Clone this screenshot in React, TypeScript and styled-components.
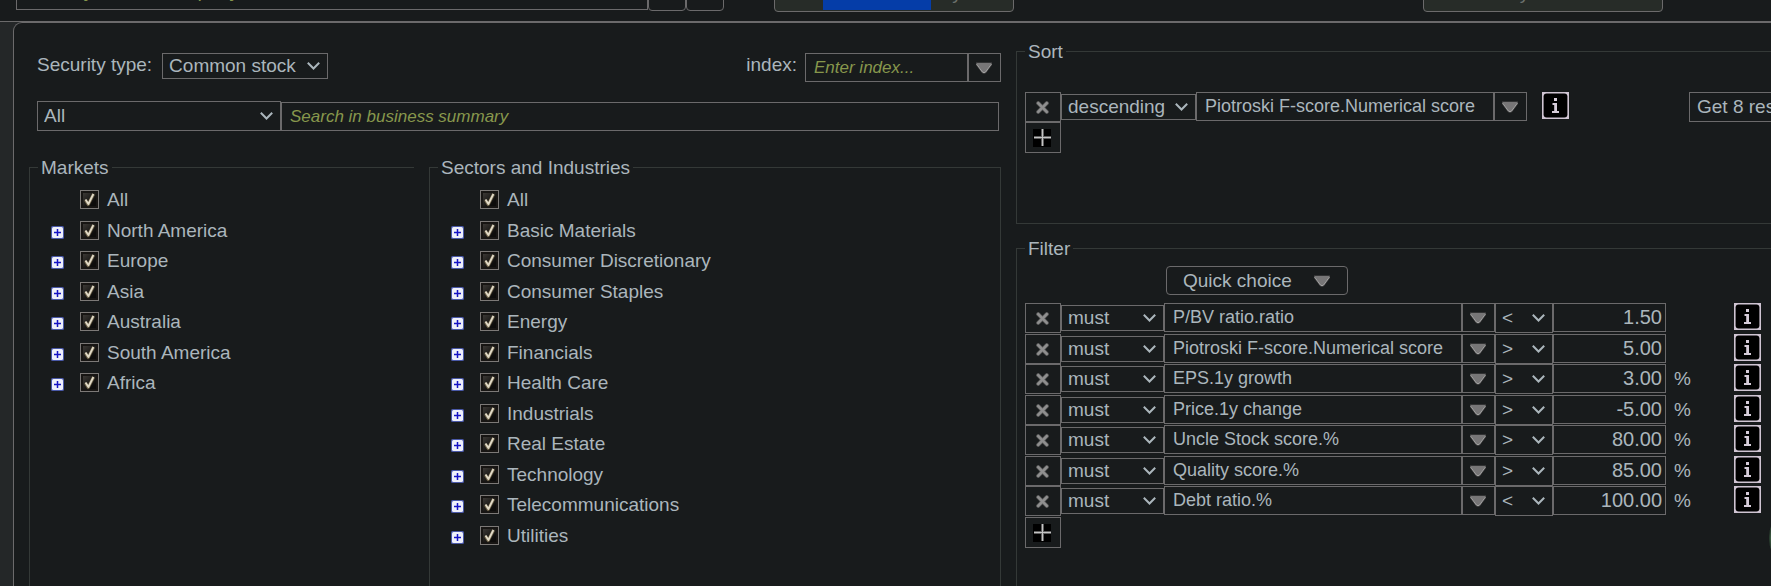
import React from "react";
import styled, { createGlobalStyle, css } from "styled-components";

const color = {
  page: "#181b1c",
  gutter: "#242728",
  line: "#6b6a6b",
  group: "#343937",
  text: "#abb6bc",
  hint: "#87974c",
  raised: "#272c28",
  highlight: "#053da8",
};

const GlobalStyle = createGlobalStyle`
  *, *::before, *::after { box-sizing: border-box; }
  html { background: ${color.page}; }
  body {
    margin: 0;
    overflow: hidden;
    color: ${color.text};
    font: 19px/22px "Liberation Sans", Arial, sans-serif;
  }
  button, input, select {
    margin: 0;
    color: inherit;
    font: inherit;
    border-radius: 0;
    outline: none;
  }
`;

const Page = styled.div`
  min-height: 100vh;
  display: flex;
  flex-direction: column;
  padding-left: 13px;
  background: linear-gradient(to right, ${color.gutter} 21px, ${color.page} 21px);
`;

/* Top bar */

const TopBar = styled.header`
  display: flex;
  align-items: flex-end;
  height: 22px;
  margin-left: -13px;
  padding: 0 108px 9px 16px;
  overflow: hidden;
  background: ${color.page};
  border-bottom: 1px solid ${color.line};
`;

const framed = css`
  background: ${color.page};
  border: 1px solid ${color.line};
`;

const SymbolInput = styled.input`
  ${framed}
  flex: 0 1 632px;
  min-width: 0;
  height: 38px;
  margin-bottom: 2px;
  padding: 0 8px;
  &::placeholder { color: ${color.hint}; font-style: italic; opacity: 1; }
`;

const SquareButton = styled.button`
  ${framed}
  flex: none;
  width: 38px;
  height: 38px;
  margin-bottom: 1px;
  border-radius: 4px;
`;

const WideButton = styled.button<{ $gap: number }>`
  flex: none;
  display: flex;
  align-items: center;
  justify-content: center;
  width: 240px;
  height: 38px;
  margin-left: ${(p) => p.$gap}px;
  padding: 0 3px 1px 0;
  overflow: hidden;
  color: #6c716d;
  background: ${color.raised};
  border: 1px solid ${color.line};
  border-radius: 4px;
`;

const Highlight = styled.span`
  align-self: stretch;
  width: 108px;
  padding-top: 4px;
  color: #fff;
  background: ${color.highlight};
  text-align: left;
`;

/* Panel */

const Panel = styled.main`
  flex: 1;
  display: grid;
  grid-template-columns: minmax(0, 987fr) minmax(0, 755fr);
  column-gap: 15px;
  background: ${color.page};
  border: solid ${color.line};
  border-width: 1px 0 0 1px;
  border-top-left-radius: 9px;
`;

const LeftColumn = styled.section`
  display: flex;
  flex-direction: column;
  padding-top: 30px;
`;

const RightColumn = styled.section`
  display: flex;
  flex-direction: column;
  gap: 14px;
  padding-top: 18px;
  margin-right: -16px;
`;

const TopRow = styled.div`
  display: flex;
  align-items: flex-start;
  justify-content: space-between;
  padding-left: 23px;
`;

const SummaryRow = styled.div`
  display: flex;
  align-items: flex-end;
  margin-top: 19px;
  padding: 0 2px 0 23px;
`;

const Field = styled.div`
  display: flex;
  align-items: flex-start;
`;

const FieldLabel = styled.label<{ $gap: number }>`
  margin-right: ${(p) => p.$gap}px;
  padding-top: 1px;
`;

const Groups = styled.div`
  flex: 1;
  display: grid;
  grid-template-columns: minmax(0, 385fr) minmax(0, 572fr);
  column-gap: 15px;
  margin: 26px 0 0 15px;
`;

const Group = styled.fieldset<{ $edges: string; $pad: string; $fill?: boolean }>`
  flex: ${(p) => (p.$fill ? 1 : "none")};
  min-width: 0;
  margin: 0;
  padding: ${(p) => p.$pad};
  border: solid ${color.group};
  border-width: ${(p) => p.$edges};
`;

const Legend = styled.legend`
  padding: 0 3px;
  line-height: 21px;
`;

/* Controls */

const SelectBox = styled.span<{ $width: number; $height: number }>`
  flex: none;
  display: grid;
  align-items: center;
  width: ${(p) => p.$width}px;
  height: ${(p) => p.$height}px;
  & > * { grid-area: 1 / 1; }
  & > svg { justify-self: end; margin-right: 8px; pointer-events: none; }
`;

const NativeSelect = styled.select`
  ${framed}
  appearance: none;
  width: 100%;
  height: 100%;
  padding: 0 0 0 6px;
`;

const TextInput = styled.input<{ $width?: number }>`
  ${framed}
  flex: ${(p) => (p.$width ? `0 0 ${p.$width}px` : "1")};
  width: ${(p) => (p.$width ? `${p.$width}px` : "auto")};
  min-width: 0;
  height: 29px;
  padding: 0 8px;
  font-size: 17px;
  &::placeholder { color: ${color.hint}; font-style: italic; opacity: 1; }
`;

const MetricInput = styled(TextInput)`
  padding: 0 8px 1px;
  font-size: 18px;
`;

const NumberInput = styled(TextInput)`
  padding: 0 3px;
  font-size: 20px;
  text-align: right;
`;

const IconButton = styled.button<{ $width: number; $height: number }>`
  ${framed}
  flex: none;
  display: flex;
  align-items: center;
  justify-content: center;
  width: ${(p) => p.$width}px;
  height: ${(p) => p.$height}px;
  padding: 0 2px 0 0;
`;

const InfoButton = styled.button`
  flex: none;
  display: block;
  width: 27px;
  height: 27px;
  padding: 0;
  background: none;
  border: 0;
`;

const ResultsButton = styled.button`
  ${framed}
  flex: none;
  height: 30px;
  margin-left: 120px;
  padding: 0 7px;
  white-space: nowrap;
`;

const QuickButton = styled.button`
  ${framed}
  display: flex;
  align-items: center;
  justify-content: space-between;
  width: 182px;
  height: 29px;
  margin: 0 0 8px 141px;
  padding: 0 17px 0 16px;
  border-radius: 4px;
`;

/* Check lists */

const CheckList = styled.ul`
  margin: 0;
  padding: 0 0 0 13px;
  list-style: none;
`;

const CheckItem = styled.li`
  display: flex;
  align-items: center;
  height: 29px;
  margin-bottom: 1px;
  &:nth-child(odd) { margin-bottom: 2px; }
`;

const Toggle = styled.button`
  width: 13px;
  height: 13px;
  margin: 3px 0 0;
  padding: 0;
  background: none;
  border: 0;
  svg { display: block; }
`;

const ToggleSpace = styled.span`
  width: 13px;
`;

const CheckLabel = styled.label`
  display: flex;
  align-items: center;
  gap: 8px;
  margin-left: 16px;
`;

const CheckBox = styled.span`
  display: grid;
  place-items: center;
  width: 19px;
  height: 19px;
  & > * { grid-area: 1 / 1; }
  & > svg { pointer-events: none; }
`;

const NativeCheck = styled.input`
  appearance: none;
  width: 19px;
  height: 19px;
  background: linear-gradient(135deg, #45423e, #0d0c0b 70%);
  border: 1px solid #7c7977;
  box-shadow: inset 0 0 0 2px #171513;
`;

/* Sort and filter rows */

const SortRow = styled.div`
  display: flex;
  align-items: flex-start;
  height: 30px;
  & > ${InfoButton} { margin-left: 15px; }
`;

const ConditionCell = styled.span`
  padding-top: 2px;
`;

const FilterRows = styled.div`
  display: flex;
  flex-direction: column;
`;

const FilterRow = styled.div`
  display: flex;
  align-items: flex-start;
  height: 30px;
  &:nth-child(odd) { height: 31px; }
`;

const Unit = styled.span`
  flex: none;
  width: 68px;
  padding: 4px 0 0 8px;
`;

const ChatBubble = styled.button`
  position: fixed;
  right: -78px;
  top: 498px;
  width: 80px;
  height: 80px;
  padding: 0;
  background: #3c5a41;
  border: 1px solid #2b3f30;
  border-radius: 50%;
`;

/* Icons */

const Chevron = () => (
  <svg width="13" height="8" viewBox="0 0 13 8" fill="none" stroke={color.text} strokeWidth="2" aria-hidden="true">
    <path d="M0.8 0.8 L6.5 6.5 L12.2 0.8" />
  </svg>
);

const Triangle = () => (
  <svg width="16" height="12" viewBox="0 0 16 12" aria-hidden="true">
    <path d="M0 0.5 H16 V3 L10 11 Q8 12.6 6 11 L0 3 Z" fill="#4b4b4b" />
    <path d="M0.5 1 H15.5 L9.6 10 Q8 11.6 6.4 10 Z" fill="#777677" />
    <path d="M0.6 2 L6.4 10 Q8 11.4 9.6 10 L15.4 2" fill="none" stroke="#a4a4a4" strokeWidth="1" />
  </svg>
);

const Cross = () => (
  <svg width="13" height="13" viewBox="0 0 13 13" fill="none" strokeLinecap="round" aria-hidden="true">
    <path d="M2.2 2.2 L10.8 10.8 M10.8 2.2 L2.2 10.8" stroke="#5a5a5a" strokeWidth="4" />
    <path d="M2.2 2.2 L10.8 10.8 M10.8 2.2 L2.2 10.8" stroke="#8f8f8f" strokeWidth="2.6" />
  </svg>
);

const Plus = () => (
  <svg width="18" height="18" viewBox="0 0 18 18" aria-hidden="true">
    <rect width="18" height="18" fill="#000" />
    <path d="M9.5 0 V17 M1 8.5 H18" stroke="#5f5f5f" strokeWidth="3" />
    <path d="M9.5 0 V17 M1 8.5 H18" stroke="#c4c4c4" strokeWidth="1" />
  </svg>
);

const Info = () => (
  <svg width="27" height="27" viewBox="0 0 27 27" aria-hidden="true">
    <rect width="27" height="27" fill="#cfc4d2" />
    <rect x="1.6" y="1.6" width="23.8" height="23.8" rx="3" fill="#000" />
    <path d="M12 6 h3 v3 h-3 Z M10.5 11 H15 V19 H17 V21 H10 V19 H12.2 V13 H10.5 Z" fill="#d6ccd9" />
  </svg>
);

const Expand = () => (
  <svg width="13" height="13" viewBox="0 0 13 13" aria-hidden="true">
    <rect width="13" height="13" rx="1.5" fill="#4a59a8" />
    <rect x="1" y="1" width="11" height="11" rx="1.5" fill="#eef0fb" />
    <path d="M6.5 3 V10 M3 6.5 H10" stroke="#1512c4" strokeWidth="1.5" />
  </svg>
);

const Tick = () => (
  <svg width="19" height="19" viewBox="0 0 19 19" fill="none" strokeLinejoin="round" aria-hidden="true">
    <path d="M5.5 10 L8.2 14.5 L13.6 4" stroke="#6b6047" strokeWidth="3.2" />
    <path d="M5.5 9.6 L8.4 14 L13.4 4" stroke="#e2dbc8" strokeWidth="1.8" />
  </svg>
);

/* Parts */

type SelectProps = {
  id?: string;
  label?: string;
  width: number;
  height: number;
  options: string[];
  value: string;
};

const Select = ({ id, label, width, height, options, value }: SelectProps) => (
  <SelectBox $width={width} $height={height}>
    <NativeSelect id={id} aria-label={label} defaultValue={value}>
      {options.map((o) => (
        <option key={o}>{o}</option>
      ))}
    </NativeSelect>
    <Chevron />
  </SelectBox>
);

const Checks = ({ items }: { items: string[] }) => (
  <CheckList>
    {["All", ...items].map((name, i) => (
      <CheckItem key={name}>
        {i === 0 ? (
          <ToggleSpace />
        ) : (
          <Toggle type="button" aria-label={`Expand ${name}`}>
            <Expand />
          </Toggle>
        )}
        <CheckLabel>
          <CheckBox>
            <NativeCheck type="checkbox" defaultChecked />
            <Tick />
          </CheckBox>
          {name}
        </CheckLabel>
      </CheckItem>
    ))}
  </CheckList>
);

const markets = ["North America", "Europe", "Asia", "Australia", "South America", "Africa"];

const sectors = [
  "Basic Materials",
  "Consumer Discretionary",
  "Consumer Staples",
  "Energy",
  "Financials",
  "Health Care",
  "Industrials",
  "Real Estate",
  "Technology",
  "Telecommunications",
  "Utilities",
];

const filters = [
  { metric: "P/BV ratio.ratio", op: "<", value: "1.50", unit: "" },
  { metric: "Piotroski F-score.Numerical score", op: ">", value: "5.00", unit: "" },
  { metric: "EPS.1y growth", op: ">", value: "3.00", unit: "%" },
  { metric: "Price.1y change", op: ">", value: "-5.00", unit: "%" },
  { metric: "Uncle Stock score.%", op: ">", value: "80.00", unit: "%" },
  { metric: "Quality score.%", op: ">", value: "85.00", unit: "%" },
  { metric: "Debt ratio.%", op: "<", value: "100.00", unit: "%" },
];

export default function App() {
  return (
    <>
      <GlobalStyle />
      <Page>
        <TopBar>
          <SymbolInput aria-label="Company" placeholder="Enter symbol or company" />
          <SquareButton type="button" aria-label="Search" />
          <SquareButton type="button" aria-label="Clear" />
          <WideButton type="button" $gap={50}>
            <Highlight>Stock comp</Highlight>any
          </WideButton>
          <WideButton type="button" $gap={409}>
            Any sector
          </WideButton>
        </TopBar>

        <Panel>
          <LeftColumn>
            <TopRow>
              <Field>
                <FieldLabel htmlFor="security-type" $gap={10}>
                  Security type:
                </FieldLabel>
                <Select
                  id="security-type"
                  width={166}
                  height={26}
                  value="Common stock"
                  options={["Common stock", "ETF"]}
                />
              </Field>
              <Field>
                <FieldLabel htmlFor="index" $gap={8}>
                  index:
                </FieldLabel>
                <TextInput id="index" $width={163} placeholder="Enter index..." />
                <IconButton type="button" $width={33} $height={29} aria-label="Choose index">
                  <Triangle />
                </IconButton>
              </Field>
            </TopRow>

            <SummaryRow>
              <Select label="Match" width={244} height={30} value="All" options={["All", "Any"]} />
              <TextInput aria-label="Business summary" placeholder="Search in business summary" />
            </SummaryRow>

            <Groups>
              <Group $edges="1px 0 0 1px" $pad="7px 8px 0">
                <Legend>Markets</Legend>
                <Checks items={markets} />
              </Group>
              <Group $edges="1px 1px 0 1px" $pad="7px 8px 0">
                <Legend>Sectors and Industries</Legend>
                <Checks items={sectors} />
              </Group>
            </Groups>
          </LeftColumn>

          <RightColumn>
            <Group $edges="1px" $pad="30px 8px 70px">
              <Legend>Sort</Legend>
              <SortRow>
                <IconButton type="button" $width={36} $height={30} aria-label="Remove sort">
                  <Cross />
                </IconButton>
                <ConditionCell>
                  <Select
                    label="Direction"
                    width={135}
                    height={26}
                    value="descending"
                    options={["descending", "ascending"]}
                  />
                </ConditionCell>
                <MetricInput aria-label="Sort by" $width={298} defaultValue="Piotroski F-score.Numerical score" />
                <IconButton type="button" $width={33} $height={29} aria-label="Choose metric">
                  <Triangle />
                </IconButton>
                <InfoButton type="button" aria-label="Info">
                  <Info />
                </InfoButton>
                <ResultsButton type="button">Get 8 results</ResultsButton>
              </SortRow>
              <IconButton type="button" $width={36} $height={31} aria-label="Add sort">
                <Plus />
              </IconButton>
            </Group>

            <Group $fill $edges="1px 1px 0 1px" $pad="7px 8px 0">
              <Legend>Filter</Legend>
              <QuickButton type="button">
                Quick choice
                <Triangle />
              </QuickButton>
              <FilterRows>
                {filters.map((f) => (
                  <FilterRow key={f.metric}>
                    <IconButton type="button" $width={36} $height={30} aria-label={`Remove ${f.metric}`}>
                      <Cross />
                    </IconButton>
                    <ConditionCell>
                      <Select
                        label="Condition"
                        width={103}
                        height={26}
                        value="must"
                        options={["must", "should"]}
                      />
                    </ConditionCell>
                    <MetricInput aria-label="Metric" $width={298} defaultValue={f.metric} />
                    <IconButton type="button" $width={33} $height={29} aria-label="Choose metric">
                      <Triangle />
                    </IconButton>
                    <Select label="Operator" width={58} height={30} value={f.op} options={["<", ">"]} />
                    <NumberInput aria-label="Value" $width={113} defaultValue={f.value} />
                    <Unit>{f.unit}</Unit>
                    <InfoButton type="button" aria-label={`Info on ${f.metric}`}>
                      <Info />
                    </InfoButton>
                  </FilterRow>
                ))}
              </FilterRows>
              <IconButton type="button" $width={36} $height={31} aria-label="Add filter">
                <Plus />
              </IconButton>
            </Group>
          </RightColumn>
        </Panel>
        <ChatBubble type="button" aria-label="Chat" />
      </Page>
    </>
  );
}
